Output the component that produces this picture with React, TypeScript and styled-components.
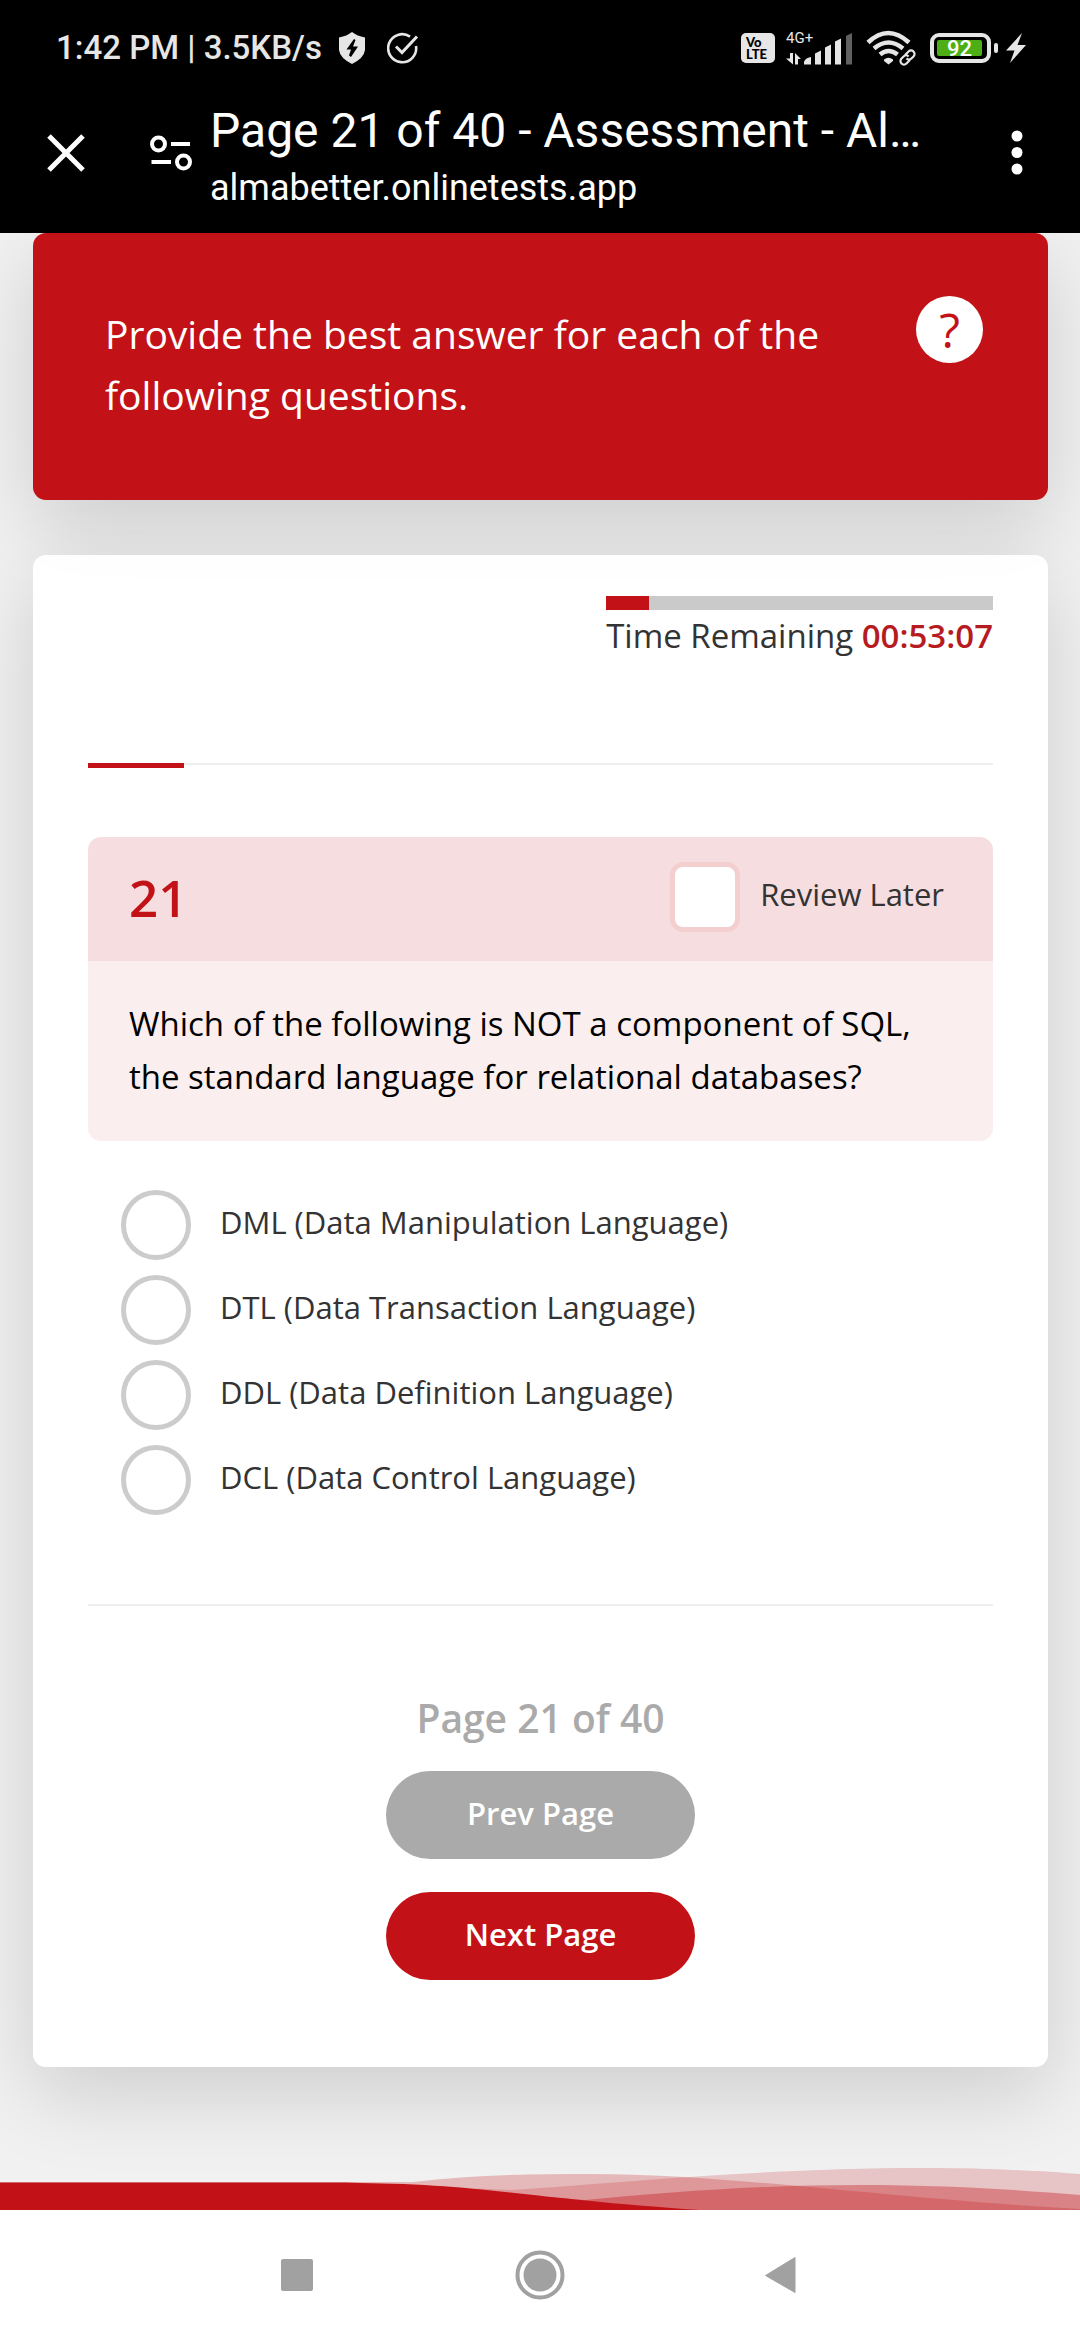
import React, { useState } from "react";
import styled, { createGlobalStyle } from "styled-components";

const red = "#c31217";
const statusGrey = "#e6e6e6";
const openSans = `"Open Sans", "Noto Sans", sans-serif`;
const roboto = `Roboto, "Noto Sans", sans-serif`;

const GlobalStyle = createGlobalStyle`
  *, *::before, *::after { box-sizing: border-box; }
  body { margin: 0; background: #f1f1f1; }
  button { border: 0; padding: 0; margin: 0; background: none; font: inherit; color: inherit; cursor: pointer; }
  svg { display: block; }
`;

const Screen = styled.div`
  min-height: 100vh;
  display: flex;
  flex-direction: column;
  overflow: hidden;
  background: #f1f1f1;
  font-family: ${openSans};
  color: #333;
`;

const Chrome = styled.header`
  position: relative;
  z-index: 1;
  background: #000;
  color: #fff;
  font-family: ${roboto};
`;

const StatusBar = styled.div`
  height: 94px;
  padding: 2px 54px 0 56px;
  display: flex;
  align-items: center;
  justify-content: space-between;
  color: ${statusGrey};
`;

const StatusGroup = styled.div<{ $gap: number }>`
  display: flex;
  align-items: center;
  gap: ${(p) => p.$gap}px;
`;

const Clock = styled.span`
  font-size: 33px;
  line-height: 40px;
  font-weight: 500;
  white-space: pre;
`;

const Volte = styled.span`
  width: 34px;
  height: 30px;
  padding: 3px 0 0 5px;
  border-radius: 5px;
  background: ${statusGrey};
  color: #000;
  font-family: Lato, sans-serif;
  font-size: 13px;
  line-height: 12px;
  font-weight: 900;
`;

const Signal = styled.span`
  display: flex;
  flex-direction: column;
  width: 66px;
  height: 34px;
  font-size: 15px;
  line-height: 14px;
  position: relative;
  svg { position: absolute; inset: 0; }
`;

const Battery = styled.span`
  width: 61px;
  height: 30px;
  padding: 3px;
  border: 4px solid ${statusGrey};
  border-radius: 9px;
  display: flex;
`;

const BatteryLevel = styled.span`
  width: 45px;
  border-radius: 2px;
  background: #4caf14;
  color: #fff;
  font-size: 22px;
  line-height: 17px;
  font-weight: 500;
  text-align: center;
`;

const BatteryNub = styled.span`
  width: 4px;
  height: 10px;
  border-radius: 2px;
  background: ${statusGrey};
`;

const AppBar = styled.div`
  height: 139px;
  padding: 0 46px 22px 46px;
  display: flex;
  align-items: center;
`;

const CloseButton = styled.button`
  margin-right: 64px;
`;

const Titles = styled.div`
  flex: 1;
  min-width: 0;
  margin-left: 18px;
  padding-top: 6px;
  display: flex;
  flex-direction: column;
  gap: 8px;
`;

const PageTitle = styled.div`
  font-size: 48px;
  line-height: 56px;
  white-space: nowrap;
`;

const PageUrl = styled.div`
  font-size: 36px;
  line-height: 42px;
`;

const Content = styled.main`
  padding: 0 32px 97px 33px;
  display: flex;
  flex-direction: column;
  gap: 55px;
`;

const Card = styled.section`
  border-radius: 13px;
  box-shadow: 0 27px 82px rgba(0, 0, 0, 0.15);
`;

const Intro = styled(Card)`
  padding: 63px 65px 75px 72px;
  display: flex;
  align-items: flex-start;
  justify-content: space-between;
  gap: 72px;
  background: ${red};
  color: #fff;
`;

const IntroText = styled.p`
  margin: 7px 0 0;
  font-size: 39px;
  line-height: 61px;
`;

const HelpButton = styled.button`
  flex: none;
  width: 67px;
  height: 67px;
  border-radius: 50%;
  background: #fff;
  color: ${red};
  font-size: 48px;
  line-height: 67px;
`;

const Assessment = styled(Card)`
  padding: 41px 55px 87px;
  background: rgba(255, 255, 255, 0.95);
`;

const Timer = styled.div`
  width: fit-content;
  margin-left: auto;
  font-size: 33px;
  line-height: 45px;
  strong { font-weight: 600; color: #b61b1f; }
`;

const TimerTrack = styled.div`
  height: 14px;
  margin-bottom: 3px;
  background: #cacaca;
`;

const TimerFill = styled.div`
  height: 100%;
  background: ${red};
`;

const Rule = styled.hr`
  height: 2px;
  margin: 0;
  border: 0;
  background: #eee;
`;

const StepTrack = styled.div`
  height: 5px;
  margin: 105px 0 69px;
  border-top: 2px solid #eee;
`;

const StepFill = styled.div`
  width: 96px;
  height: 5px;
  margin-top: -2px;
  background: ${red};
`;

const Question = styled.div`
  border-radius: 13px;
  overflow: hidden;
`;

const QuestionHead = styled.div`
  height: 124px;
  padding: 25px 49px 29px 41px;
  display: flex;
  justify-content: space-between;
  background: #f6dee0;
`;

const QuestionNumber = styled.h2`
  margin: 0;
  font-size: 51px;
  line-height: 70px;
  font-weight: 600;
  color: ${red};
`;

const QuestionText = styled.p`
  margin: 0;
  padding: 36px 41px 38px;
  background: #faeeee;
  color: #000;
  font-size: 33px;
  line-height: 53px;
`;

const Choice = styled.label<{ $gap: number }>`
  display: flex;
  align-items: center;
  gap: ${(p) => p.$gap}px;
  font-size: 31px;
  line-height: 42px;
  cursor: pointer;
`;

const ChoiceText = styled.span`
  padding-bottom: 6px;
`;

const CheckBox = styled.input`
  appearance: none;
  flex: none;
  width: 70px;
  height: 70px;
  margin: 0;
  border: 5px solid #f3cfd0;
  border-radius: 13px;
  background: #fff;
  &:checked { background: ${red}; }
`;

const Radio = styled.input`
  appearance: none;
  flex: none;
  width: 70px;
  height: 70px;
  margin: 0;
  border: 5px solid #ccc;
  border-radius: 50%;
  background: #fff;
  &:checked { background: radial-gradient(${red} 18px, #fff 19px); }
`;

const Options = styled.div`
  padding: 49px 33px 89px;
  display: flex;
  flex-direction: column;
  gap: 15px;
`;

const Pager = styled.nav`
  padding-top: 86px;
  display: flex;
  flex-direction: column;
  align-items: center;
`;

const PageCount = styled.p`
  margin: 0 0 27px;
  font-size: 39px;
  line-height: 52px;
  font-weight: 600;
  color: #aaa;
`;

const PageButton = styled.button<{ $primary?: boolean }>`
  min-width: 309px;
  height: 88px;
  padding: 0 40px 4px;
  border-radius: 44px;
  background: ${(p) => (p.$primary ? red : "#aaa")};
  color: #fff;
  font-size: 31px;
  line-height: 42px;
  font-weight: 600;
  & + & { margin-top: 33px; }
`;

const Wave = styled.svg`
  width: 100%;
  height: 46px;
  margin-top: auto;
`;

const SystemNav = styled.nav`
  height: 130px;
  display: flex;
  align-items: center;
  justify-content: center;
  gap: 193px;
  background: #fff;
`;

const options = [
  "DML (Data Manipulation Language)",
  "DTL (Data Transaction Language)",
  "DDL (Data Definition Language)",
  "DCL (Data Control Language)",
];

const ShieldIcon = () => (
  <svg width="28" height="32" viewBox="0 0 28 32">
    <path d="M14 0 Q19 4 27 5.500 V18 Q26 26 14 32 Q2 26 1 18 V5.500 Q9 4 14 0Z" fill={statusGrey} />
    <path d="M16 7 8.500 17.500H13L11 23.500 13 25 20 14.500H15L17.500 8Z" fill="#000" />
  </svg>
);

const CheckCircleIcon = () => (
  <svg width="32" height="32" viewBox="0 0 32 32" fill="none" stroke={statusGrey} strokeWidth="2.600">
    <path d="M23 4.600A14 14 0 1 0 29 14" />
    <path d="M9 14.500 15 20.500 30 4.500" strokeWidth="3" />
  </svg>
);

const SignalBars = () => (
  <svg width="66" height="34" viewBox="0 0 66 34" fill={statusGrey}>
    <path d="M4 22h3v11.500L0 27.500h4zM9 33.500V22l6 6h-3v5.500z" />
    <path d="M18 33.500v-2.500q1-4 7-5v7.500zM29 33.500V22.500l6-3v14zM39 33.500V16.500l6-3v20zM49 33.500v-23l6-3v26z" />
    <path d="M60 33.500V5l6-3v31.500z" fill="#606060" />
  </svg>
);

const WifiIcon = () => (
  <svg width="50" height="36" viewBox="0 0 50 36" fill="none" stroke={statusGrey}>
    <path d="M2 12.500Q22-6.500 43 12.500" strokeWidth="4.500" />
    <path d="M8 18.500Q22.500 6.500 37 18.500" strokeWidth="4.500" />
    <path d="M14 24.500Q22.500 17.500 31.500 24.500" strokeWidth="4.500" />
    <path d="M18 29.500Q22.500 26 27 29.500V31L22.500 34.500 18 31Z" fill={statusGrey} stroke="none" />
    <g transform="translate(41.500 27.500) rotate(-45)" strokeWidth="2.200">
      <path d="M-1 4H-4.500A4 4 0 0 1-4.500-4H-1A4 4 0 0 1 3-1" stroke="#000" strokeWidth="6" />
      <path d="M0 3.500H-5A3.500 3.500 0 0 1-5-3.500H-2A3.500 3.500 0 0 1 1.500 0" />
      <path d="M0-3.500H5A3.500 3.500 0 0 1 5 3.500H2A3.500 3.500 0 0 1-1.500 0" />
    </g>
  </svg>
);

const BoltIcon = () => (
  <svg width="20" height="30" viewBox="0 0 20 30" fill={statusGrey}>
    <path d="M16 0 0 17.500H8.500L4 30 20 12H11.500Z" />
  </svg>
);

export default function App() {
  const [answer, setAnswer] = useState("");
  const [review, setReview] = useState(false);
  const elapsed = 11;

  return (
    <Screen>
      <GlobalStyle />
      <Chrome>
        <StatusBar>
          <StatusGroup $gap={16}>
            <Clock>1:42 PM | 3.5KB/s</Clock>
            <StatusGroup $gap={21}>
              <ShieldIcon />
              <CheckCircleIcon />
            </StatusGroup>
          </StatusGroup>
          <StatusGroup $gap={14}>
            <StatusGroup $gap={11}>
              <Volte>Vo<br />LTE</Volte>
              <Signal>
                4G+
                <SignalBars />
              </Signal>
            </StatusGroup>
            <WifiIcon />
            <StatusGroup $gap={8}>
              <StatusGroup $gap={3}>
                <Battery>
                  <BatteryLevel>92</BatteryLevel>
                </Battery>
                <BatteryNub />
              </StatusGroup>
              <BoltIcon />
            </StatusGroup>
          </StatusGroup>
        </StatusBar>
        <AppBar>
          <CloseButton aria-label="Close tab">
            <svg width="40" height="40" viewBox="0 0 40 40" stroke="#fff" strokeWidth="5">
              <path d="M3 3 37 37M37 3 3 37" />
            </svg>
          </CloseButton>
          <button aria-label="Site settings">
            <svg width="42" height="36" viewBox="0 0 42 36" fill="none" stroke="#fff" strokeWidth="4">
              <circle cx="8.500" cy="9" r="6.500" />
              <circle cx="33.500" cy="27" r="6.500" />
              <path d="M21 9H40M1.500 27H21" />
            </svg>
          </button>
          <Titles>
            <PageTitle>Page 21 of 40 - Assessment - Al…</PageTitle>
            <PageUrl>almabetter.onlinetests.app</PageUrl>
          </Titles>
          <button aria-label="More options">
            <svg width="34" height="48" viewBox="0 0 34 48" fill="#fff">
              <circle cx="17" cy="7" r="5.500" />
              <circle cx="17" cy="23.500" r="5.500" />
              <circle cx="17" cy="40" r="5.500" />
            </svg>
          </button>
        </AppBar>
      </Chrome>

      <Content>
        <Intro>
          <IntroText>Provide the best answer for each of the following questions.</IntroText>
          <HelpButton>?</HelpButton>
        </Intro>

        <Assessment>
          <Timer>
            <TimerTrack>
              <TimerFill style={{ width: `${elapsed}%` }} />
            </TimerTrack>
            Time Remaining <strong>00:53:07</strong>
          </Timer>

          <StepTrack>
            <StepFill />
          </StepTrack>

          <Question>
            <QuestionHead>
              <QuestionNumber>21</QuestionNumber>
              <Choice $gap={20}>
                <CheckBox type="checkbox" checked={review} onChange={(e) => setReview(e.target.checked)} />
                <ChoiceText>Review Later</ChoiceText>
              </Choice>
            </QuestionHead>
            <QuestionText>
              Which of the following is NOT a component of SQL, the standard language for relational databases?
            </QuestionText>
          </Question>

          <Options role="radiogroup">
            {options.map((text) => (
              <Choice key={text} $gap={29}>
                <Radio type="radio" name="answer" value={text} checked={answer === text} onChange={() => setAnswer(text)} />
                <ChoiceText>{text}</ChoiceText>
              </Choice>
            ))}
          </Options>

          <Rule />

          <Pager>
            <PageCount>Page 21 of 40</PageCount>
            <PageButton>Prev Page</PageButton>
            <PageButton $primary>Next Page</PageButton>
          </Pager>
        </Assessment>
      </Content>

      <Wave viewBox="0 0 1080 46" preserveAspectRatio="none" aria-hidden="true">
        <g fill={red} fillOpacity="0.2">
          <path d="M0 18H413C470 11 530 10 590 10C730 10 880 34 1080 45V46H0Z" fillOpacity="0.25" />
          <path d="M0 18H345L510 26C620 19 760 4 925 4C990 4 1040 7 1080 10V46H0Z" />
          <path d="M0 18H345L585 36C670 28 760 21 860 21C950 21 1020 26 1080 31V46H0Z" fillOpacity="0.36" />
        </g>
        <path d="M0 19H345C480 19 520 34 700 46H0Z" fill={red} />
      </Wave>

      <SystemNav aria-label="System">
        <button aria-label="Recent apps">
          <svg width="50" height="50" viewBox="0 0 50 50">
            <rect x="9" y="9" width="32" height="32" rx="2" fill="#a1a1a1" />
          </svg>
        </button>
        <button aria-label="Home">
          <svg width="50" height="50" viewBox="0 0 50 50">
            <circle cx="25" cy="25" r="22.500" fill="none" stroke="#a1a1a1" strokeWidth="4" />
            <circle cx="25" cy="25" r="16.500" fill="#a1a1a1" />
          </svg>
        </button>
        <button aria-label="Back">
          <svg width="50" height="50" viewBox="0 0 50 50">
            <path d="M7.500 25.500 37 7.500V42.500L7.500 25.500Z" fill="#a1a1a1" stroke="#a1a1a1" strokeLinejoin="round" />
          </svg>
        </button>
      </SystemNav>
    </Screen>
  );
}
